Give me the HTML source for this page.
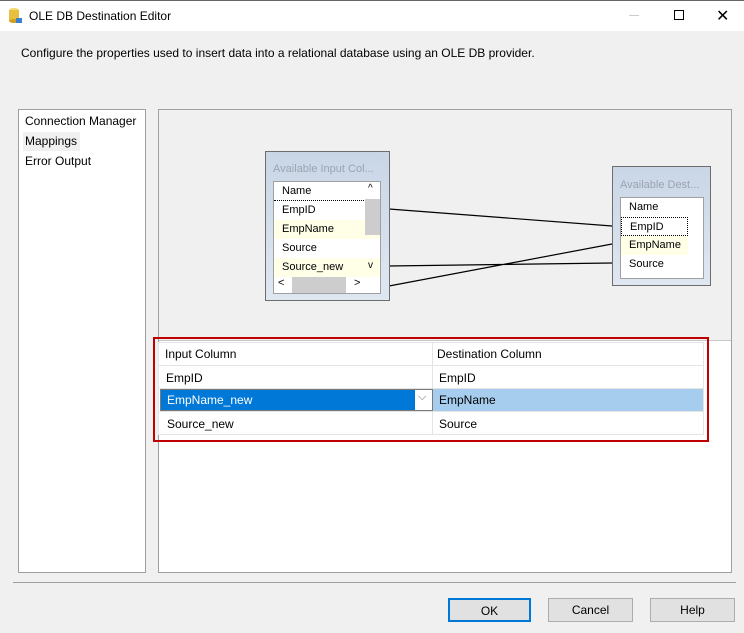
<!DOCTYPE html><html><head><style>
*{box-sizing:border-box;margin:0;padding:0}
body{width:744px;height:633px;background:#f0f0f0;font-family:"Liberation Sans",sans-serif;font-size:12px;color:#000;position:relative;overflow:hidden}
.a{position:absolute}
.btn{position:absolute;top:598px;height:24px;background:#e1e1e1;border:1px solid #adadad;text-align:center;line-height:22px;font-size:12px}
.box{position:absolute;border:1px solid #6d6d6d;background:linear-gradient(#c9d6e6,#dfe7f1);}
.lst div{height:19px;line-height:19px;padding-left:8px;font-size:11px}
</style></head><body>
<div class="a" style="left:0;top:0;width:744px;height:31px;background:#fff;border-top:1px solid #666"></div>
<svg class="a" style="left:8px;top:7px" width="14" height="17"><ellipse cx="6" cy="3" rx="5" ry="2" fill="#f4d870"/><rect x="1" y="3" width="10" height="11" fill="#e8c040"/><ellipse cx="6" cy="14" rx="5" ry="2" fill="#d0a020"/><rect x="8" y="11" width="6" height="5" fill="#3a7fd0"/></svg>
<div class="a" style="left:29px;top:9px;font-size:12px">OLE DB Destination Editor</div>
<div class="a" style="left:629px;top:15px;width:10px;height:1px;background:#ccc"></div>
<div class="a" style="left:674px;top:10px;width:10px;height:10px;border:1px solid #000"></div>
<div class="a" style="left:716px;top:6px;font-size:16px">✕</div>
<div class="a" style="left:21px;top:46px">Configure the properties used to insert data into a relational database using an OLE DB provider.</div>
<div class="a" style="left:18px;top:109px;width:128px;height:464px;background:#fff;border:1px solid #a0a0a0"></div>
<div class="a" style="left:25px;top:114px">Connection Manager</div>
<div class="a" style="left:23px;top:132px;width:57px;height:19px;background:#f0f0f0"></div>
<div class="a" style="left:25px;top:134px">Mappings</div>
<div class="a" style="left:25px;top:154px">Error Output</div>
<div class="a" style="left:158px;top:109px;width:574px;height:464px;background:#fff;border:1px solid #a0a0a0"></div>
<div class="a" style="left:159px;top:110px;width:572px;height:231px;background:#f0f0f0;border-bottom:1px solid #c8c8c8"></div>
<svg class="a" style="left:0;top:0" width="744" height="633"><g stroke="#000" stroke-width="1.2" fill="none"><path d="M389 209L612 226M389 266L612 263M389 286L612 244"/></g></svg>
<div class="box" style="left:265px;top:151px;width:125px;height:150px"></div>
<div class="a" style="left:273px;top:163px;color:#9aa4b0;font-size:11px">Available Input Col...</div>
<div class="a lst" style="left:273px;top:181px;width:108px;height:113px;background:#fff;border:1px solid #a0a0a0">
<div style="border-bottom:1px dotted #000">Name</div><div>EmpID</div><div style="background:#ffffe8">EmpName</div><div>Source</div><div style="background:#ffffe8">Source_new</div></div>
<div class="a" style="left:365px;top:199px;width:15px;height:36px;background:#cdcdcd"></div>
<div class="a" style="left:292px;top:277px;width:54px;height:16px;background:#cdcdcd"></div>
<div class="a" style="left:368px;top:183px;font-size:10px">^</div>
<div class="a" style="left:368px;top:260px;font-size:10px">v</div>
<div class="a" style="left:278px;top:277px;font-size:11px">&lt;</div>
<div class="a" style="left:354px;top:277px;font-size:11px">&gt;</div>
<div class="box" style="left:612px;top:166px;width:99px;height:120px"></div>
<div class="a" style="left:620px;top:179px;color:#9aa4b0;font-size:11px">Available Dest...</div>
<div class="a lst" style="left:620px;top:197px;width:84px;height:82px;background:#fff;border:1px solid #a0a0a0">
<div style="width:67px">Name</div><div style="width:67px;border:1px dotted #000">EmpID</div><div style="width:67px;background:#ffffe8">EmpName</div><div style="width:67px">Source</div></div>
<div class="a" style="left:153px;top:337px;width:556px;height:105px;border:2px solid #c00000"></div>
<div class="a" style="left:158px;top:342px;width:546px;height:93px;border:1px solid #e4e4e4"></div>
<div class="a" style="left:432px;top:342px;width:1px;height:93px;background:#e4e4e4"></div>
<div class="a" style="left:158px;top:365px;width:546px;height:1px;background:#e4e4e4"></div>
<div class="a" style="left:158px;top:388px;width:546px;height:1px;background:#e4e4e4"></div>
<div class="a" style="left:158px;top:411px;width:546px;height:1px;background:#e4e4e4"></div>
<div class="a" style="left:165px;top:347px">Input Column</div>
<div class="a" style="left:437px;top:347px">Destination Column</div>
<div class="a" style="left:166px;top:371px">EmpID</div>
<div class="a" style="left:439px;top:371px">EmpID</div>
<div class="a" style="left:160px;top:389px;width:273px;height:22px;border:1px solid #7a7a7a;background:#fff"></div>
<div class="a" style="left:161px;top:390px;width:254px;height:20px;background:#0078d7;color:#fff;padding:3px 6px">EmpName_new</div>
<div class="a" style="left:418px;top:391px;color:#666;font-size:11px">⌵</div>
<div class="a" style="left:433px;top:389px;width:270px;height:22px;background:#a6cdee;padding:4px 6px">EmpName</div>
<div class="a" style="left:167px;top:417px">Source_new</div>
<div class="a" style="left:439px;top:417px">Source</div>
<div class="a" style="left:13px;top:582px;width:723px;height:1px;background:#a0a0a0"></div>
<div class="btn" style="left:448px;width:83px;border:2px solid #0078d7">OK</div>
<div class="btn" style="left:548px;width:85px">Cancel</div>
<div class="btn" style="left:650px;width:85px">Help</div>
</body></html>
